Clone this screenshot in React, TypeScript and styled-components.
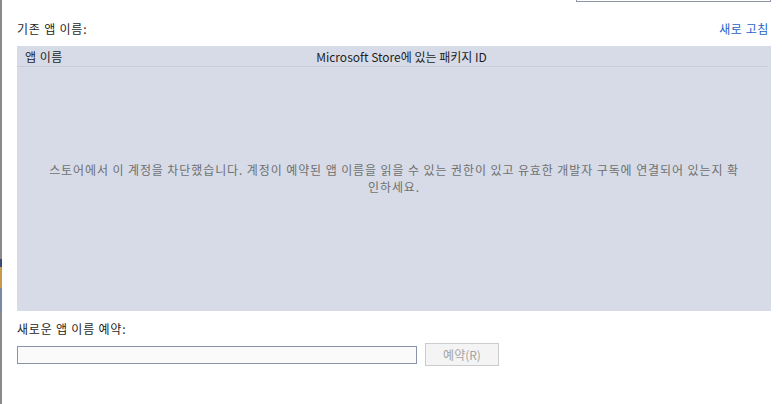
import React from "react";
import styled, { createGlobalStyle } from "styled-components";

const Global = createGlobalStyle`
  html, body { margin: 0; padding: 0; background: #ffffff; }
  body { font-family: "Noto Sans CJK KR", "Noto Sans", sans-serif; font-size: 12px; color: #1e1e1e; }
`;

const Frame = styled.div`
  display: flex;
  width: 782px;
  height: 404px;
  overflow: hidden;
  background: #ffffff;
`;

const EdgeStrip = styled.div`
  display: flex;
  flex-direction: column;
  width: 2px;
  flex: none;
`;

const EdgeSeg = styled.div<{ $h?: number; $c: string }>`
  flex: ${(p) => (p.$h ? `0 0 ${p.$h}px` : "1 1 auto")};
  background: ${(p) => p.$c};
`;

const Main = styled.div`
  flex: 1;
  display: flex;
  flex-direction: column;
  padding: 0 11px 0 15px;
`;

const TopBar = styled.div`
  display: flex;
  justify-content: flex-end;
  height: 2px;
`;

const TopBox = styled.div`
  width: 195px;
  height: 2px;
  box-sizing: border-box;
  border: 1px solid #8e96a8;
  border-top: none;
`;

const LabelRow = styled.div<{ $mt: number }>`
  display: flex;
  align-items: center;
  justify-content: space-between;
  height: 18px;
  margin-top: ${(p) => p.$mt}px;
  line-height: 18px;
  white-space: nowrap;
  letter-spacing: 0.8px;
`;

const Link = styled.span`
  color: #1f62c4;
  cursor: pointer;
  margin-right: 2px;
  letter-spacing: 0.6px;
`;

const Panel = styled.div`
  margin-top: 8px;
  height: 265px;
  background: #d6dbe7;
  display: flex;
  flex-direction: column;
`;

const HeaderRow = styled.div`
  display: grid;
  grid-template-columns: 200px 1fr 182px;
  height: 20px;
  align-items: center;
  border-bottom: 1px solid #c7ccda;
  margin-right: 3px;
  white-space: nowrap;
`;

const HeaderCell = styled.div<{ $center?: boolean }>`
  padding-left: ${(p) => (p.$center ? 0 : 8)}px;
  text-align: ${(p) => (p.$center ? "center" : "left")};
  letter-spacing: ${(p) => (p.$center ? 0 : 0.5)}px;
`;

const EmptyBody = styled.div`
  flex: 1;
  display: flex;
  align-items: center;
  justify-content: center;
  padding: 0 28px 23px;
`;

const Message = styled.p`
  margin: 0;
  text-align: center;
  color: #707070;
  line-height: 17px;
  letter-spacing: 0.9px;
  word-break: break-all;
`;

const InputRow = styled.div`
  display: flex;
  align-items: center;
  gap: 8px;
  margin-top: 5px;
  height: 23px;
`;

const TextBox = styled.input`
  width: 400px;
  height: 18px;
  box-sizing: border-box;
  border: 1px solid #8a94a8;
  background: #fafafa;
  padding: 0 3px;
  font: inherit;
  outline: none;
`;

const Button = styled.button`
  width: 74px;
  height: 23px;
  box-sizing: border-box;
  border: 1px solid #cccccc;
  background: #f4f4f4;
  color: #a3a3a3;
  font: inherit;
  padding: 0;
`;

export default function App() {
  return (
    <>
      <Global />
      <Frame>
        <EdgeStrip>
          <EdgeSeg $h={259} $c="#8a8a8a" />
          <EdgeSeg $h={8} $c="#3d4a78" />
          <EdgeSeg $h={21} $c="#c49a4c" />
          <EdgeSeg $h={25} $c="#7a88a8" />
          <EdgeSeg $c="#8a8a8a" />
        </EdgeStrip>
        <Main>
          <TopBar>
            <TopBox />
          </TopBar>
          <LabelRow $mt={18}>
            <span>기존 앱 이름:</span>
            <Link>새로 고침</Link>
          </LabelRow>
          <Panel>
            <HeaderRow>
              <HeaderCell>앱 이름</HeaderCell>
              <HeaderCell $center>Microsoft Store에 있는 패키지 ID</HeaderCell>
              <div />
            </HeaderRow>
            <EmptyBody>
              <Message>
                스토어에서 이 계정을 차단했습니다. 계정이 예약된 앱 이름을 읽을 수 있는 권한이 있고 유효한 개발자 구독에 연결되어 있는지 확인하세요.
              </Message>
            </EmptyBody>
          </Panel>
          <LabelRow $mt={9}>
            <span>새로운 앱 이름 예약:</span>
          </LabelRow>
          <InputRow>
            <TextBox />
            <Button disabled>예약(R)</Button>
          </InputRow>
        </Main>
      </Frame>
    </>
  );
}
